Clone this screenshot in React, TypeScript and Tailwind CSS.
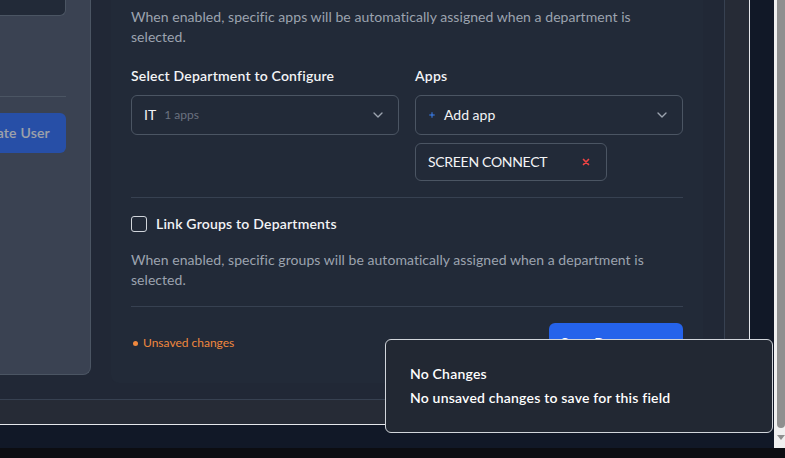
import { ChevronDown, Plus } from "lucide-react";

const LeftPanel = () => (
    <div className="w-[91px] h-[375px] shrink-0 flex flex-col items-end pr-6 overflow-hidden bg-[#3a4252] border-r border-b border-[#4b5563] rounded-br-lg">
        <div className="w-[200px] h-[16px] shrink-0 bg-[#222a38] border-r border-b border-[#4b5563] rounded-br-md" />
        <div className="w-[200px] h-px shrink-0 mt-[80px] bg-[#4b5563]" />
        <button className="mt-4 h-10 shrink-0 px-4 rounded-md bg-blue-600 opacity-50 text-white text-sm font-semibold tracking-[0.2px] whitespace-nowrap">
            Create User
        </button>
    </div>
);

const CrossIcon = () => (
    <svg width="8" height="8" viewBox="0 0 8 8" className="shrink-0">
        <path d="M1.5 1.5 L6.5 6.5 M6.5 1.5 L1.5 6.5" stroke="#ef4444" strokeWidth="1.7" strokeLinecap="round" />
    </svg>
);

const DepartmentCard = () => (
    <div className="ml-5 w-[592px] h-[383px] shrink-0 px-5 pt-[7px] flex flex-col bg-[#222a38] rounded-b-lg">
        <p className="text-sm leading-5 text-[#9ca3af] tracking-[0.05px]">
            When enabled, specific apps will be automatically assigned when a department is selected.
        </p>

        <div className="mt-[19px] grid grid-cols-2 gap-4">
            <div className="flex flex-col">
                <label className="text-sm leading-5 font-semibold tracking-[0.2px] text-[#f3f4f6]">Select Department to Configure</label>
                <div className="mt-[9px] h-10 px-3 flex items-center justify-between border border-[#4b5563] rounded-md">
                    <div className="flex items-center gap-2">
                        <span className="text-sm text-[#f3f4f6]">IT</span>
                        <span className="text-xs text-[#6b7280]">1 apps</span>
                    </div>
                    <ChevronDown size={16} className="text-[#9ca3af]" />
                </div>
            </div>
            <div className="flex flex-col">
                <label className="text-sm leading-5 font-semibold tracking-[0.2px] text-[#f3f4f6]">Apps</label>
                <div className="mt-[9px] h-10 px-3 flex items-center justify-between border border-[#4b5563] rounded-md">
                    <div className="flex items-center gap-2">
                        <Plus size={8} strokeWidth={3} className="text-[#3b82f6]" />
                        <span className="text-sm text-[#f3f4f6]">Add app</span>
                    </div>
                    <ChevronDown size={16} className="text-[#9ca3af]" />
                </div>
                <div className="mt-2 w-[192px] h-[38px] pl-3 pr-4 flex items-center justify-between border border-[#4b5563] rounded-md">
                    <span className="text-sm text-[#f3f4f6] tracking-[-0.3px]">SCREEN CONNECT</span>
                    <CrossIcon />
                </div>
            </div>
        </div>

        <div className="mt-4 h-px bg-[#374151]" />

        <div className="mt-4 h-5 flex items-center gap-[9px]">
            <div className="w-4 h-4 border-[1.5px] border-[#d1d5db] rounded-[3px]" />
            <span className="text-sm leading-5 font-semibold tracking-[0.2px] text-[#f3f4f6]">Link Groups to Departments</span>
        </div>

        <p className="mt-4 text-sm leading-5 text-[#9ca3af] tracking-[0.05px]">
            When enabled, specific groups will be automatically assigned when a department is selected.
        </p>

        <div className="mt-4 h-px bg-[#374151]" />

        <div className="mt-4 h-10 flex items-center justify-between">
            <div className="flex items-center gap-[5px] pl-[2px]">
                <span className="w-[5px] h-[5px] rounded-full bg-[#f0883e]" />
                <span className="text-xs text-[#f0883e]">Unsaved changes</span>
            </div>
            <button className="w-[134px] h-10 rounded-md bg-[#2563eb] text-white text-sm font-semibold tracking-[0.2px]">
                Save Department
            </button>
        </div>
    </div>
);

export default function App() {
    return (
        <div className="w-[785px] h-[458px] overflow-hidden flex flex-col bg-[#0c0d12] font-['Lato',sans-serif]">
            <div className="h-[448px] shrink-0 flex">
                <div className="relative w-[774px] h-full shrink-0 bg-[#111827]">
                    {/* modal */}
                    <div className="w-[750px] h-[425px] flex flex-col bg-[#262b36] border-r border-b border-[#e5e7eb]">
                        <div className="h-[400px] shrink-0 flex border-b border-[#374151]">
                            <div className="w-[725px] h-full shrink-0 flex bg-[#212836] border-r border-[#374151]">
                                <LeftPanel />
                                <DepartmentCard />
                            </div>
                        </div>
                        <div className="flex-1" />
                    </div>

                    {/* toast */}
                    <div className="absolute left-[385px] top-[339px] w-[388px] px-6 py-6 flex flex-col gap-1 bg-[#222833] border border-[#d1d5db] rounded-md">
                        <p className="text-sm leading-5 font-semibold tracking-[0.2px] text-white">No Changes</p>
                        <p className="text-sm leading-5 font-semibold tracking-[0.2px] text-white">No unsaved changes to save for this field</p>
                    </div>
                </div>

                {/* scrollbar */}
                <div className="w-[11px] h-full shrink-0 flex flex-col bg-[#f0f0f0]">
                    <div className="ml-[3px] h-[428px] bg-[#8f8f8f] rounded-b-sm" />
                    <div className="mt-[7px] ml-[3px] w-0 h-0 border-l-[4px] border-r-[4px] border-t-[5px] border-l-transparent border-r-transparent border-t-[#8f8f8f]" />
                </div>
            </div>
            <div className="h-[10px]" />
        </div>
    );
}
